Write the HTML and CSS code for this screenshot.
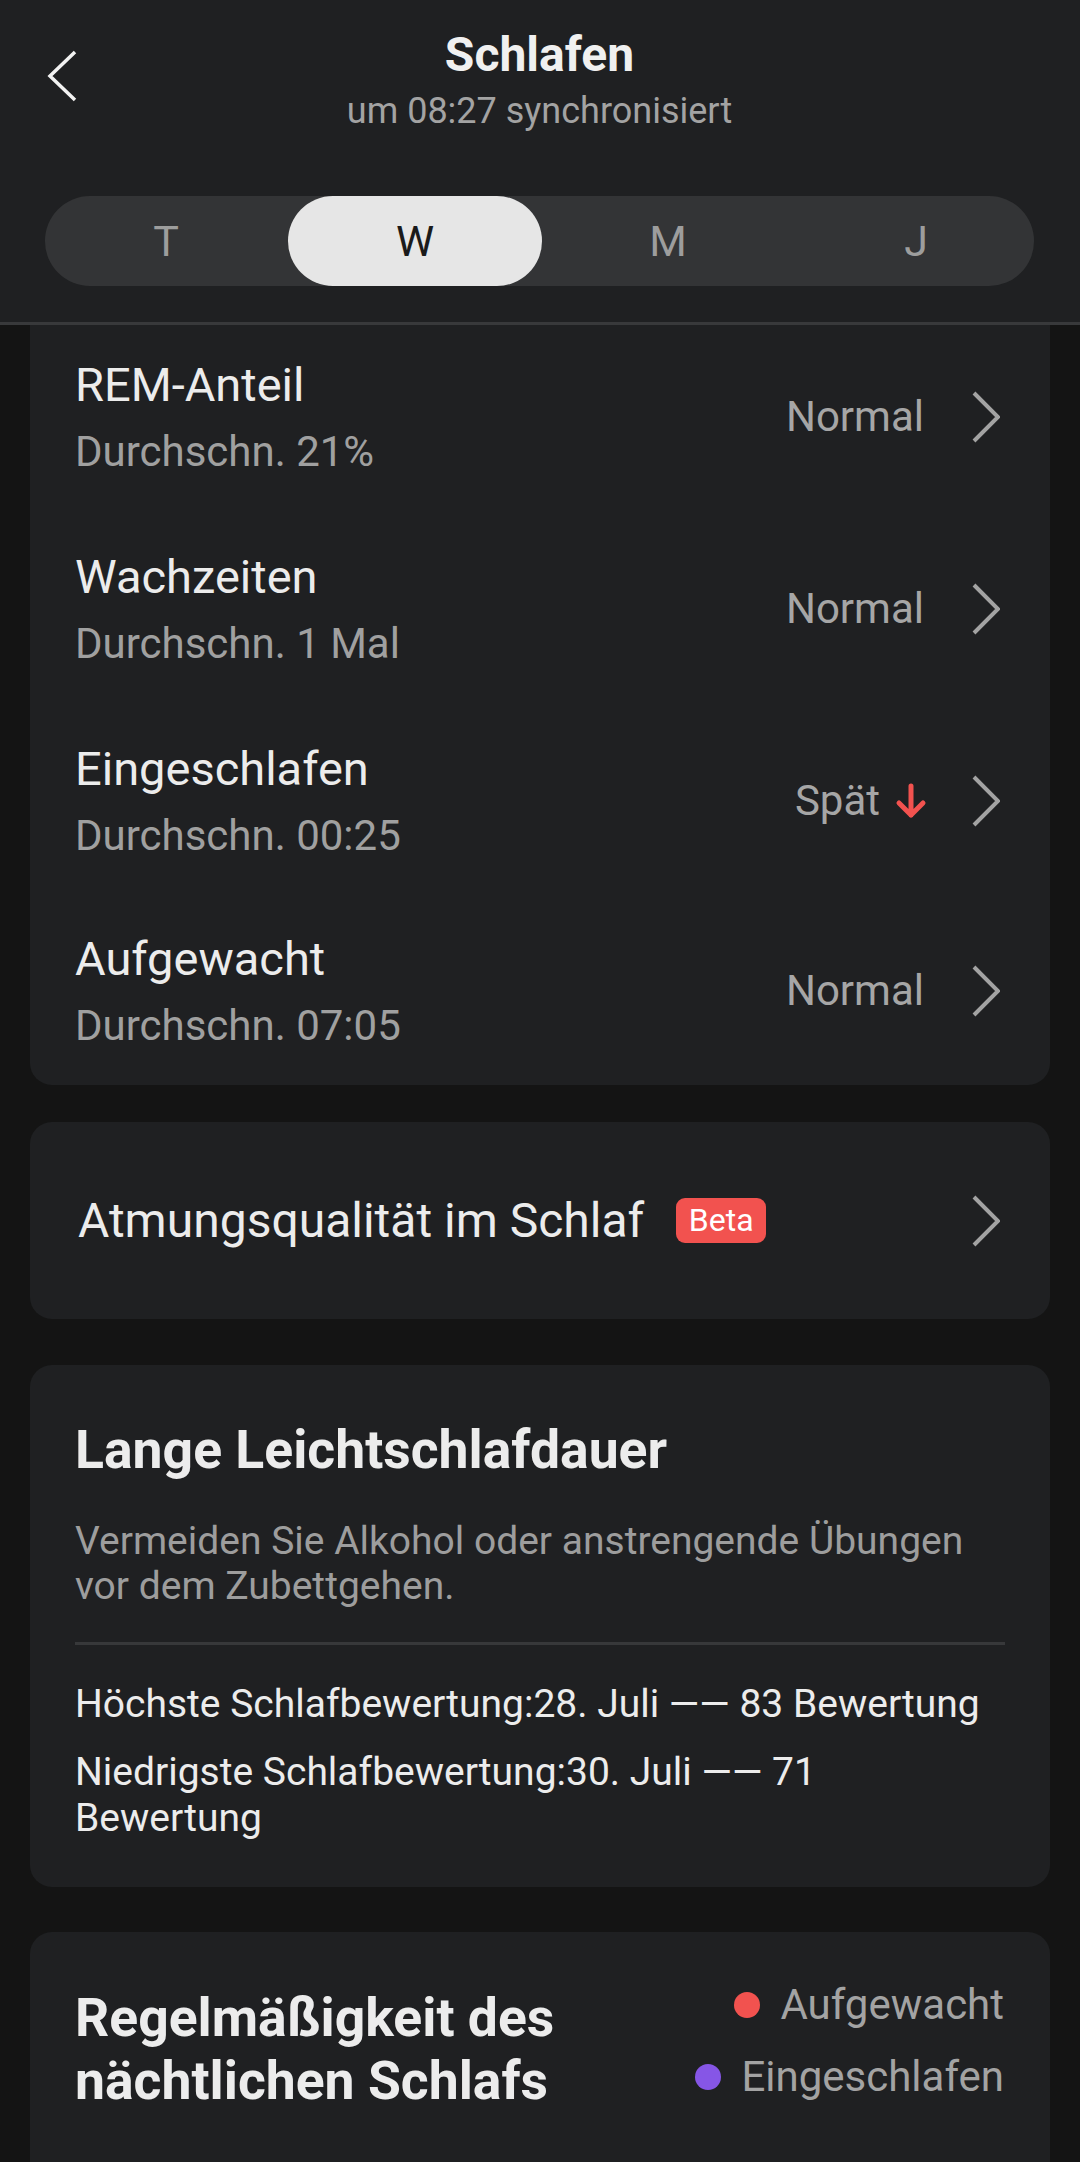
FILE: index.html
```html
<!DOCTYPE html>
<html lang="de">
<head>
<meta charset="utf-8">
<title>Schlafen</title>
<link rel="stylesheet" href="styles.css">
</head>
<body>
<header class="header">
  <div class="topbar">
    <svg class="back" width="30" height="52" viewBox="0 0 30 52"><path d="M28 2 L3 26 L28 50" fill="none" stroke="#f2f2f2" stroke-width="3.5" stroke-linecap="butt" stroke-linejoin="miter"/></svg>
    <div class="titles">
      <div class="title">Schlafen</div>
      <div class="subtitle">um 08:27 synchronisiert</div>
    </div>
    <div class="spacer"></div>
  </div>
  <div class="segments">
    <div class="seg"><span class="seg-label seg-t">T</span></div>
    <div class="seg active"><span class="seg-label">W</span></div>
    <div class="seg"><span class="seg-label seg-m">M</span></div>
    <div class="seg"><span class="seg-label seg-j">J</span></div>
  </div>
</header>

<main class="content">
  <section class="card list-card">
    <div class="row">
      <div class="row-text">
        <div class="row-title">REM-Anteil</div>
        <div class="row-sub">Durchschn. 21%</div>
      </div>
      <div class="row-status">Normal</div>
      <svg class="chev" width="28" height="52" viewBox="0 0 28 52"><path d="M2 2 L26 26 L2 50" fill="none" stroke="#a3a3a3" stroke-width="4"/></svg>
    </div>
    <div class="row">
      <div class="row-text">
        <div class="row-title">Wachzeiten</div>
        <div class="row-sub">Durchschn. 1 Mal</div>
      </div>
      <div class="row-status">Normal</div>
      <svg class="chev" width="28" height="52" viewBox="0 0 28 52"><path d="M2 2 L26 26 L2 50" fill="none" stroke="#a3a3a3" stroke-width="4"/></svg>
    </div>
    <div class="row">
      <div class="row-text">
        <div class="row-title">Eingeschlafen</div>
        <div class="row-sub">Durchschn. 00:25</div>
      </div>
      <div class="row-status">Spät<svg class="down" width="32" height="36" viewBox="0 0 32 36"><path d="M16 3 V32 M4 20 L16 32 L28 20" fill="none" stroke="#f2524f" stroke-width="5" stroke-linecap="round" stroke-linejoin="round"/></svg></div>
      <svg class="chev chev-near" width="28" height="52" viewBox="0 0 28 52"><path d="M2 2 L26 26 L2 50" fill="none" stroke="#a3a3a3" stroke-width="4"/></svg>
    </div>
    <div class="row row-last">
      <div class="row-text">
        <div class="row-title">Aufgewacht</div>
        <div class="row-sub">Durchschn. 07:05</div>
      </div>
      <div class="row-status">Normal</div>
      <svg class="chev" width="28" height="52" viewBox="0 0 28 52"><path d="M2 2 L26 26 L2 50" fill="none" stroke="#a3a3a3" stroke-width="4"/></svg>
    </div>
  </section>

  <section class="card link-card">
    <div class="link-title">Atmungsqualität im Schlaf</div>
    <span class="badge">Beta</span>
    <svg class="chev chev-end" width="28" height="52" viewBox="0 0 28 52"><path d="M2 2 L26 26 L2 50" fill="none" stroke="#a3a3a3" stroke-width="4"/></svg>
  </section>

  <section class="card tip-card">
    <h2 class="card-heading">Lange Leichtschlafdauer</h2>
    <p class="tip-desc">Vermeiden Sie Alkohol oder anstrengende Übungen vor dem Zubettgehen.</p>
    <div class="divider"></div>
    <p class="stat">Höchste Schlafbewertung:28. Juli —— 83 Bewertung</p>
    <p class="stat">Niedrigste Schlafbewertung:30. Juli —— 71 Bewertung</p>
  </section>

  <section class="card reg-card">
    <h2 class="card-heading reg-heading">Regelmäßigkeit des nächtlichen Schlafs</h2>
    <div class="legend">
      <div class="legend-item"><span class="dot dot-red"></span>Aufgewacht</div>
      <div class="legend-item"><span class="dot dot-purple"></span>Eingeschlafen</div>
    </div>
  </section>
</main>
</body>
</html>
```

FILE: styles.css
```css
* { box-sizing: border-box; }

html, body {
  margin: 0;
  padding: 0;
}

body {
  width: 1080px;
  min-height: 2162px;
  background: #141414;
  font-family: Roboto, "Noto Sans", "Liberation Sans", sans-serif;
  color: #ececec;
  overflow: hidden;
}

/* Header */
.header {
  position: relative;
  z-index: 2;
  background: #1f2022;
  padding: 27px 46px 36px 45px;
  border-bottom: 3px solid #38393b;
  height: 325px;
}

.topbar {
  display: grid;
  grid-template-columns: 200px 1fr 200px;
  align-items: start;
}

.back {
  display: block;
  margin-top: 23px;
  margin-left: 2px;
}

.titles {
  text-align: center;
}

.title {
  font-size: 48px;
  line-height: 56px;
  font-weight: 700;
  color: #f0f0f0;
}

.subtitle {
  margin-top: 6px;
  font-size: 36px;
  line-height: 44px;
  color: #a3a3a3;
}

.segments {
  margin-top: 63px;
  height: 90px;
  display: flex;
  background: #333436;
  border-radius: 45px;
}

.seg {
  flex: 1 1 0;
  min-width: 0;
  display: flex;
  align-items: center;
  justify-content: center;
  font-size: 43px;
  color: #9d9d9d;
  border-radius: 45px;
}

.seg.active {
  flex: 0 0 254px;
  margin-left: -3px;
  background: #e6e6e6;
  color: #1a1a1a;
}

.seg-t { margin-right: 4px; }
.seg-m { margin-left: 6px; }
.seg-j { margin-left: 10px; }

/* Content */
.content {
  padding: 0 30px;
  margin-top: -4px;
}

.card {
  background: #1f2022;
  border-radius: 22px;
}

.list-card {
  border-radius: 0 0 22px 22px;
}

.row {
  height: 192px;
  display: flex;
  align-items: center;
  padding: 0 50px 0 45px;
}

.row-last {
  height: 188px;
}

.row-text {
  flex: 1;
}

.row-title {
  font-size: 47px;
  line-height: 56px;
  color: #ececec;
}

.row-sub {
  margin-top: 13px;
  font-size: 42px;
  line-height: 52px;
  color: #a0a0a0;
}

.row-status {
  display: flex;
  align-items: center;
  font-size: 42px;
  line-height: 52px;
  color: #a6a6a6;
}

.down {
  display: block;
  margin-left: 15px;
}

.chev {
  display: block;
  margin-left: 48px;
}

.chev-near {
  margin-left: 45px;
}

/* Link card */
.link-card {
  margin-top: 37px;
  height: 197px;
  display: flex;
  align-items: center;
  padding: 0 50px 0 48px;
}

.link-title {
  font-size: 48px;
  line-height: 56px;
  color: #ececec;
}

.badge {
  margin-left: 32px;
  width: 90px;
  height: 45px;
  border-radius: 9px;
  background: #f2524f;
  color: #ffffff;
  font-size: 32px;
  line-height: 45px;
  text-align: center;
}

.chev-end {
  margin-left: auto;
}

/* Tip card */
.tip-card {
  margin-top: 46px;
  padding: 54px 45px 46px 45px;
}

.card-heading {
  margin: 0;
  font-size: 53.5px;
  line-height: 62px;
  font-weight: 700;
  color: #ececec;
}

.tip-desc {
  margin: 38px 0 0;
  font-size: 39px;
  line-height: 45px;
  color: #9d9d9d;
}

.divider {
  margin-top: 33px;
  height: 3px;
  background: #37383a;
}

.stat {
  margin: 36px 0 0;
  font-size: 39px;
  line-height: 46px;
  color: #ececec;
}

.stat + .stat {
  margin-top: 22px;
}

/* Regularity card */
.reg-card {
  margin-top: 45px;
  height: 400px;
  display: flex;
  justify-content: space-between;
  align-items: flex-start;
  padding: 48px 46px 0 45px;
}

.reg-heading {
  margin-top: 6px;
  line-height: 63px;
  width: 560px;
}

.legend {
  display: flex;
  flex-direction: column;
  align-items: flex-end;
  gap: 22px;
}

.legend-item {
  display: flex;
  align-items: center;
  gap: 20px;
  font-size: 42px;
  line-height: 50px;
  color: #a3a3a3;
}

.dot {
  width: 26px;
  height: 26px;
  border-radius: 50%;
}

.dot-red { background: #f2524f; }
.dot-purple { background: #8656e6; }
```
